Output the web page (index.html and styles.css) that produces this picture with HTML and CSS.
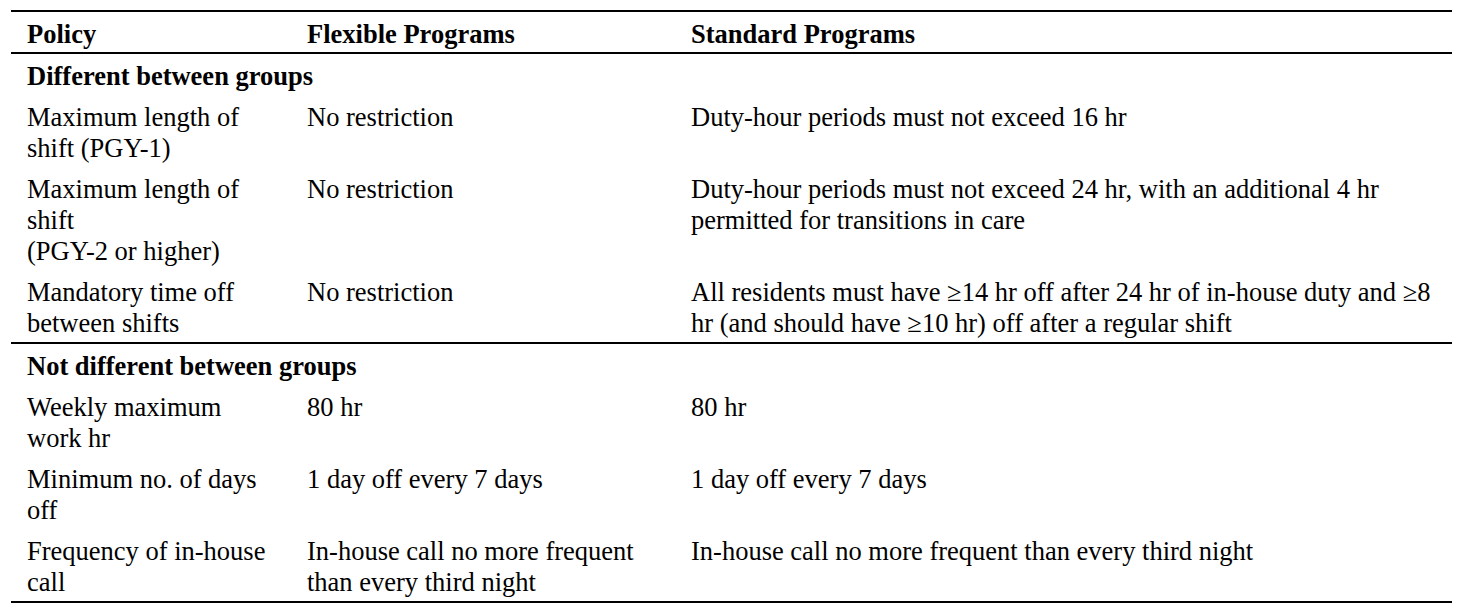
FILE: index.html
```html
<!DOCTYPE html>
<html lang="en">
<head>
<meta charset="utf-8">
<title>Duty-hour policies</title>
<link rel="stylesheet" href="styles.css">
</head>
<body>
<div class="tbl">
  <div class="row head">
    <div class="c1">Policy</div>
    <div class="c2">Flexible Programs</div>
    <div class="c3">Standard Programs</div>
  </div>
  <div class="row section">
    <div class="full">Different between groups</div>
  </div>
  <div class="row">
    <div class="c1">Maximum length of shift (PGY-1)</div>
    <div class="c2">No restriction</div>
    <div class="c3">Duty-hour periods must not exceed 16 hr</div>
  </div>
  <div class="row">
    <div class="c1">Maximum length of shift<br>(PGY-2 or higher)</div>
    <div class="c2">No restriction</div>
    <div class="c3">Duty-hour periods must not exceed 24 hr, with an additional 4 hr permitted for transitions in care</div>
  </div>
  <div class="row">
    <div class="c1">Mandatory time off between shifts</div>
    <div class="c2">No restriction</div>
    <div class="c3">All residents must have ≥14 hr off after 24 hr of in-house duty and ≥8 hr (and should have ≥10 hr) off after a regular shift</div>
  </div>
  <div class="row section divider">
    <div class="full">Not different between groups</div>
  </div>
  <div class="row">
    <div class="c1">Weekly maximum work hr</div>
    <div class="c2">80 hr</div>
    <div class="c3">80 hr</div>
  </div>
  <div class="row">
    <div class="c1">Minimum no. of days off</div>
    <div class="c2">1 day off every 7 days</div>
    <div class="c3">1 day off every 7 days</div>
  </div>
  <div class="row">
    <div class="c1">Frequency of in-house call</div>
    <div class="c2">In-house call no more frequent than every third night</div>
    <div class="c3">In-house call no more frequent than every third night</div>
  </div>
</div>
</body>
</html>
```

FILE: styles.css
```css
html, body {
  margin: 0;
  padding: 0;
  background: #fff;
}

body {
  font-family: "Liberation Serif", "Times New Roman", serif;
  font-size: 26.5px;
  line-height: 31px;
  color: #000;
}

.tbl {
  margin: 10px 0 0 11px;
  width: 1441px;
  border-top: 2px solid #000;
  border-bottom: 2px solid #000;
}

.row {
  display: grid;
  grid-template-columns: 280px 384px 1fr;
  padding: 7px 6px 3px 16px;
}

.head {
  font-weight: bold;
  padding-bottom: 2px;
  border-bottom: 2px solid #000;
}

.section {
  font-weight: bold;
}

.divider {
  border-top: 2px solid #000;
}

.full {
  grid-column: 1 / -1;
}

.c1 {
  padding-right: 32px;
}

.c2 {
  padding-right: 34px;
}
```
